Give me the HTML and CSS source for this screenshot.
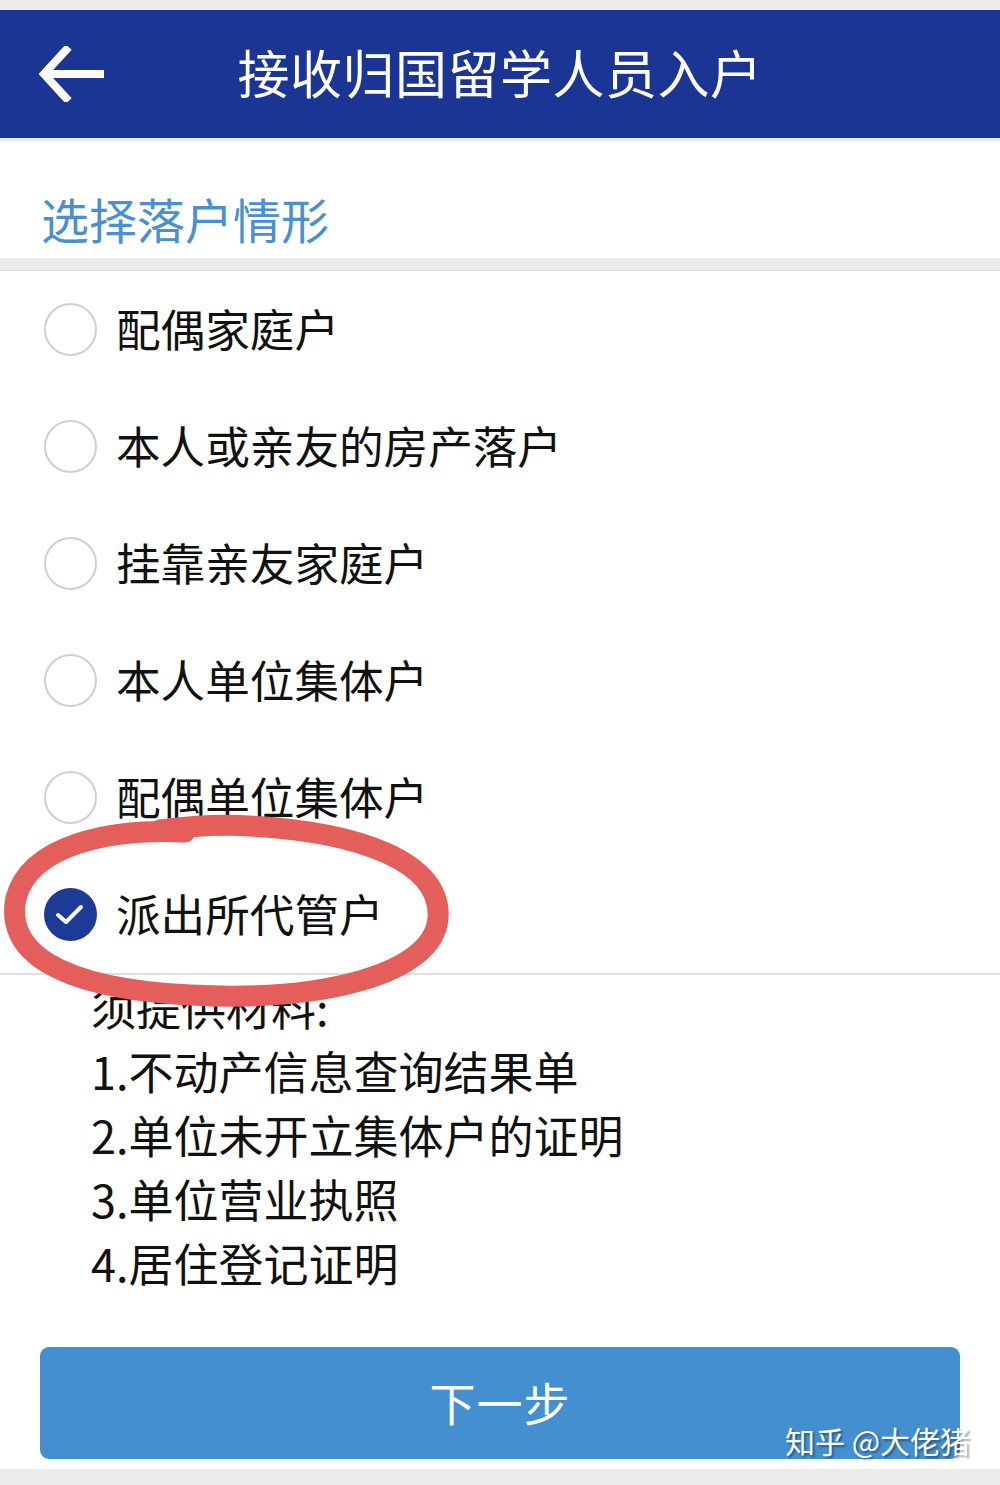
FILE: index.html
```html
<!DOCTYPE html>
<html lang="zh-CN">
<head>
<meta charset="utf-8">
<title>接收归国留学人员入户</title>
<link rel="stylesheet" href="styles.css">
</head>
<body>
<div class="page">
  <div class="topstrip"></div>
  <header class="header">
    <div class="back">
      <svg width="66" height="56" viewBox="0 0 66 56" aria-hidden="true">
        <path d="M28 4 L6 28 L28 52 M8 28 L63 28" fill="none" stroke="#fff" stroke-width="8" stroke-linecap="square" stroke-linejoin="miter"/>
      </svg>
    </div>
    <h1 class="title">接收归国留学人员入户</h1>
    <div class="spacer"></div>
  </header>
  <div class="headline"></div>
  <section class="section-head">
    <h2 class="section-title">选择落户情形</h2>
  </section>
  <div class="band"></div>
  <ul class="options">
    <li class="option"><span class="radio"></span><span class="label">配偶家庭户</span></li>
    <li class="option"><span class="radio"></span><span class="label">本人或亲友的房产落户</span></li>
    <li class="option"><span class="radio"></span><span class="label">挂靠亲友家庭户</span></li>
    <li class="option"><span class="radio"></span><span class="label">本人单位集体户</span></li>
    <li class="option"><span class="radio"></span><span class="label">配偶单位集体户</span></li>
    <li class="option"><span class="radio checked">
      <svg width="53" height="53" viewBox="0 0 53 53" aria-hidden="true"><path d="M14 27 L22 34 L37 19" fill="none" stroke="#fff" stroke-width="4" stroke-linecap="round" stroke-linejoin="round"/></svg>
    </span><span class="label">派出所代管户</span></li>
  </ul>
  <div class="materials">
    <p>须提供材料:</p>
    <p>1.不动产信息查询结果单</p>
    <p>2.单位未开立集体户的证明</p>
    <p>3.单位营业执照</p>
    <p>4.居住登记证明</p>
  </div>
  <div class="actions">
    <button class="next">下一步</button>
  </div>
  <div class="bottomstrip"></div>

  <svg class="mark" width="1000" height="1485" viewBox="0 0 1000 1485" aria-hidden="true">
    <path d="M185 832 C 110 828, 30 845, 16 898 C 5 950, 55 988, 190 995 C 320 1002, 434 975, 438 918 C 442 862, 360 832, 250 826 C 220 824, 190 826, 160 830" fill="none" stroke="#e45f5b" stroke-width="21" stroke-linecap="round"/>
  </svg>
  <div class="watermark">知乎 @大佬猪</div>
</div>
</body>
</html>
```

FILE: styles.css
```css
* { box-sizing: border-box; }
html, body { margin: 0; padding: 0; background: #fff; }
body {
  font-family: "Noto Sans CJK SC", "Noto Sans", sans-serif;
  color: #111;
}
.page {
  position: relative;
  width: 1000px;
  height: 1485px;
  display: flex;
  flex-direction: column;
  overflow: hidden;
}
.topstrip { height: 10px; background: #ececee; }
.header {
  height: 128px;
  background: #1b3594;
  display: flex;
  align-items: center;
}
.back {
  width: 140px;
  padding-left: 38px;
  display: flex;
  align-items: center;
}
.back svg { display: block; }
.title {
  flex: 1;
  margin: 0;
  text-align: center;
  color: #fff;
  font-weight: 400;
  font-size: 52px;
  letter-spacing: 0.5px;
  line-height: 1;
  padding-bottom: 4px;
}
.spacer { width: 140px; }
.headline { height: 3px; background: #e9ecf3; }
.section-head {
  height: 117px;
  display: flex;
  align-items: flex-end;
  padding: 0 0 10px 41px;
}
.section-title {
  margin: 0;
  font-weight: 400;
  font-size: 48px;
  line-height: 1.2;
  color: #4a8fd0;
}
.band {
  height: 13px;
  background: #ebebeb;
  border-bottom: 1px solid #dddddd;
}
.options {
  list-style: none;
  margin: 0;
  padding: 0;
  border-bottom: 2px solid #dedede;
}
.option {
  height: 117px;
  display: flex;
  align-items: center;
  padding-left: 44px;
}
.radio {
  width: 53px;
  height: 53px;
  border-radius: 50%;
  border: 2px solid #cfcfcf;
  flex: none;
  display: flex;
  align-items: center;
  justify-content: center;
}
.radio.checked {
  background: #1d3a96;
  border: none;
}
.radio.checked svg { display: block; }
.label {
  margin-left: 19px;
  font-size: 44.6px;
  line-height: 1;
  color: #111;
  padding-bottom: 2px;
}
.materials {
  padding-left: 91px;
  padding-top: 0;
}
.materials p {
  margin: 0;
  font-size: 45px;
  line-height: 64px;
  color: #111;
}
.actions {
  padding: 52px 40px 10px;
}
.next {
  display: block;
  width: 100%;
  height: 112px;
  border: none;
  border-radius: 9px;
  background: #438fcf;
  color: #fff;
  font-family: "Noto Sans CJK SC", "Noto Sans", sans-serif;
  font-size: 46px;
  font-weight: 400;
  letter-spacing: 1px;
  padding-bottom: 6px;
}
.bottomstrip { flex: 1; background: #ebebeb; }
.mark {
  position: absolute;
  left: 0;
  top: 0;
  pointer-events: none;
}
.watermark {
  position: absolute;
  left: 785px;
  top: 1420px;
  font-size: 30px;
  line-height: 40px;
  color: #fff;
  text-shadow: 2px 2px 2px rgba(0,0,0,0.35);
  white-space: nowrap;
}
```
